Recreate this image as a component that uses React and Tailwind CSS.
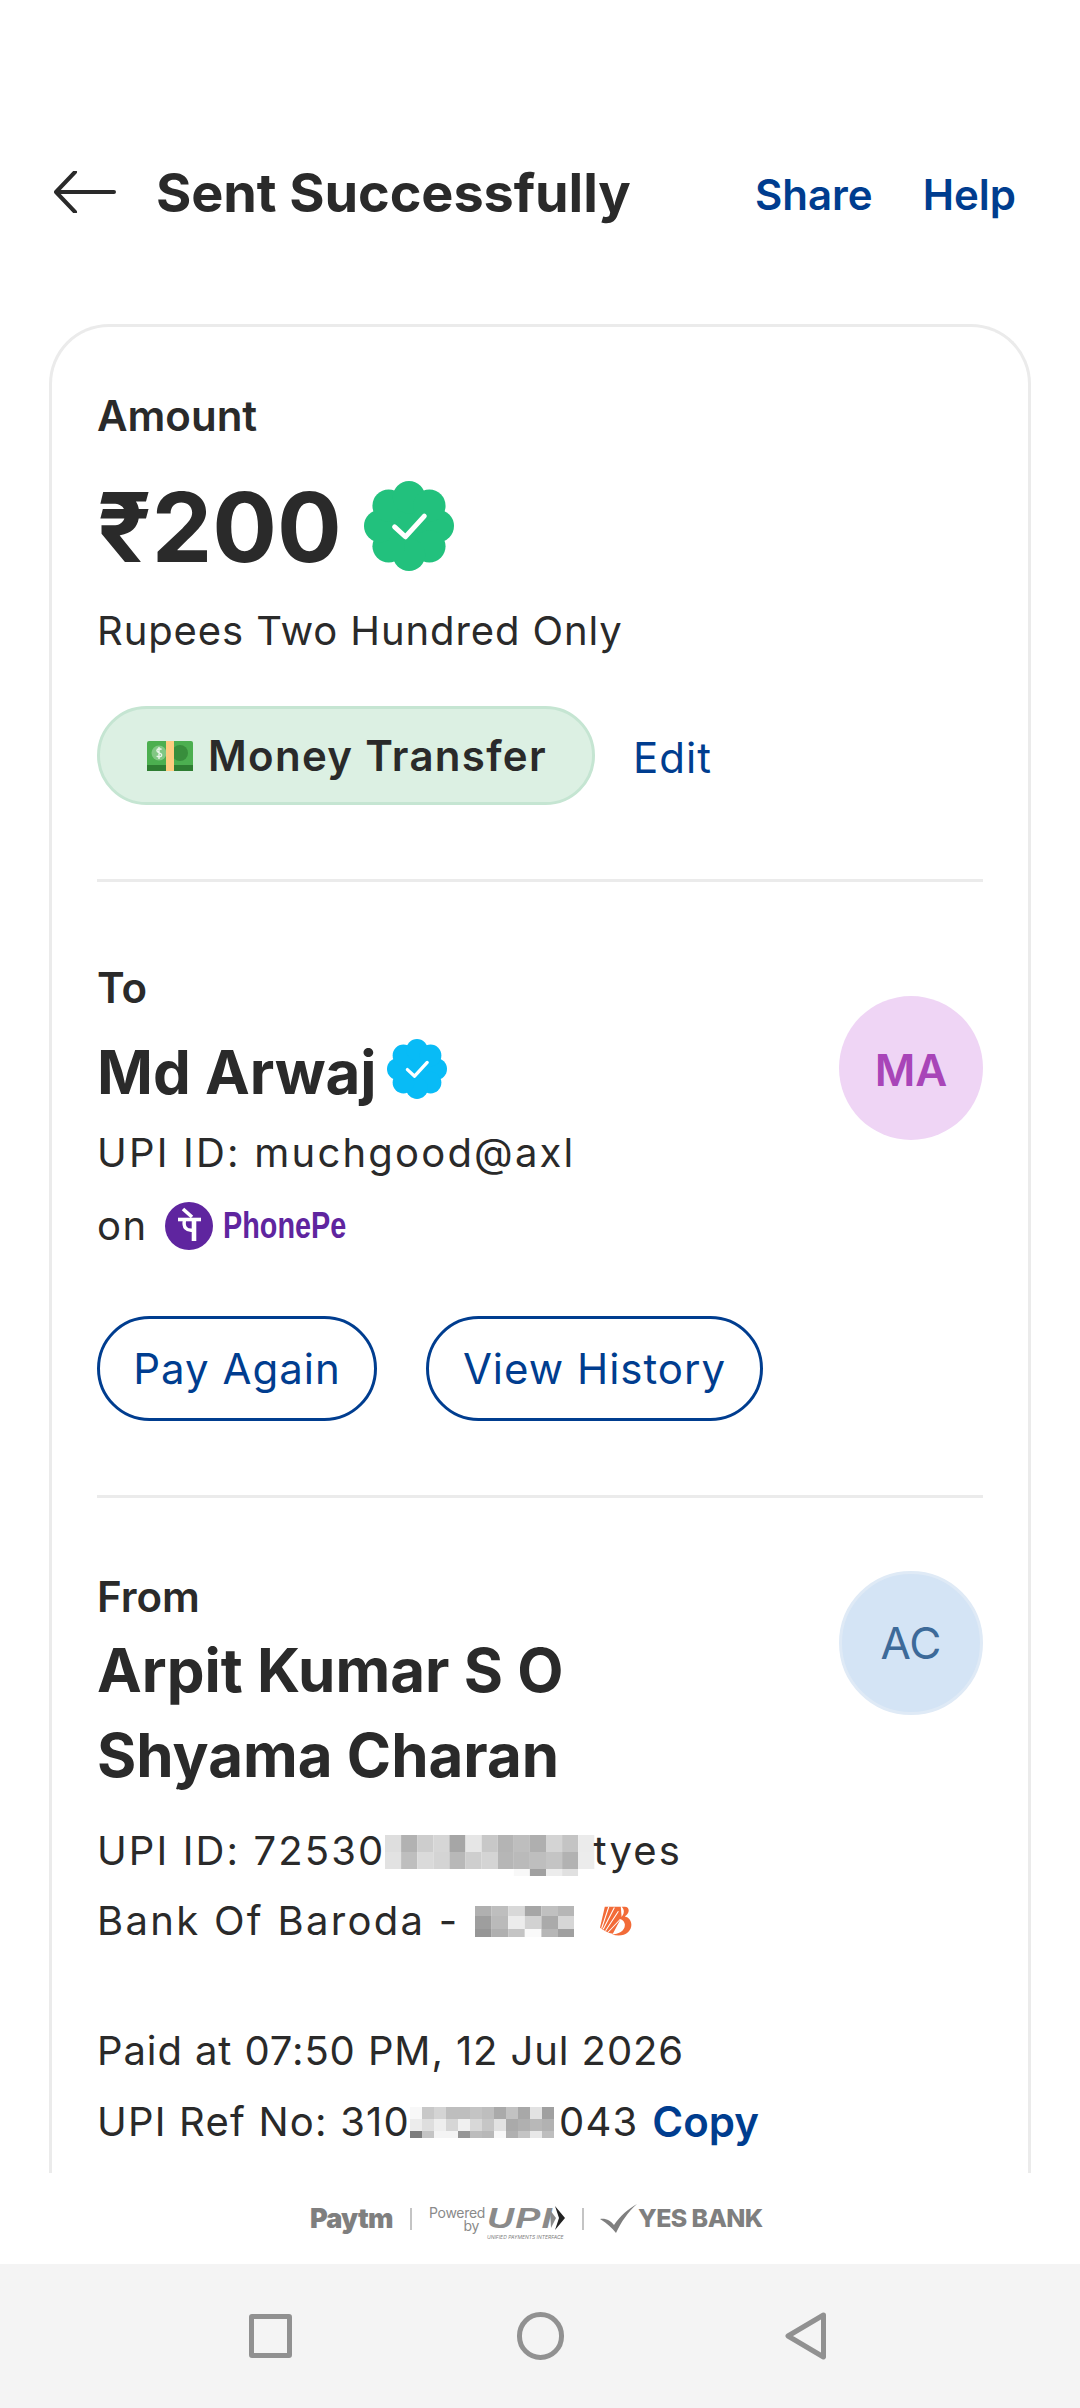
import React from 'react';

const Scallop = ({ size, color }) => {
    const lobes = Array.from({ length: 8 }, (_, i) => {
        const a = (i * Math.PI) / 4;
        return { cx: 50 + 32 * Math.cos(a), cy: 50 + 32 * Math.sin(a) };
    });
    return (
        <svg width={size} height={size} viewBox="0 0 100 100" className="shrink-0">
            <circle cx="50" cy="50" r="36" fill={color} />
            {lobes.map((l, i) => (
                <circle key={i} cx={l.cx} cy={l.cy} r="18" fill={color} />
            ))}
            <path d="M34 51 L46 62 L67 39" fill="none" stroke="white" strokeWidth="5.5" strokeLinecap="round" strokeLinejoin="round" />
        </svg>
    );
};

// pixelated part of the screenshot, rowHeights lets the last row be cut short
const Mosaic = ({ cellW, rowHeights, rows, className }) => {
    let top = 0;
    const placed = rows.map((row, i) => {
        const y = top;
        top += rowHeights[i];
        return { row, y, h: rowHeights[i] };
    });
    return (
        <svg width={rows[0].length * cellW} height={top} className={className}>
            {placed.map(({ row, y, h }) =>
                row.map((g, x) => (
                    <rect key={`${x}-${y}`} x={x * cellW} y={y} width={cellW} height={h} fill={`rgb(${g},${g},${g})`} />
                ))
            )}
        </svg>
    );
};

const MOSAIC_UPI = [
    [222, 178, 205, 214, 166, 230, 200, 180, 190, 175, 212, 196, 235],
    [226, 190, 218, 212, 184, 206, 212, 182, 186, 190, 196, 178, 236],
    [255, 255, 255, 255, 255, 255, 255, 255, 248, 160, 236, 224, 255],
];
const MOSAIC_BANK = [
    [176, 190, 216, 166, 192, 182],
    [158, 186, 236, 210, 170, 214],
    [150, 176, 196, 250, 182, 160],
];
const MOSAIC_REF = [
    [248, 200, 212, 190, 190, 196, 190, 170, 194, 168, 226, 160],
    [236, 222, 238, 214, 240, 216, 198, 226, 170, 176, 184, 178],
    [124, 196, 244, 244, 150, 188, 184, 248, 176, 196, 232, 190],
];

const Label = ({ children, className = '' }) => (
    <div className={`text-[42px] leading-[50px] font-semibold text-[#2a2a2a] ${className}`}>{children}</div>
);

const Body = ({ children, className = '' }) => (
    <div className={`text-[40px] leading-[50px] h-[50px] text-[#2a2a2a] ${className}`}>{children}</div>
);

const Avatar = ({ children, className }) => (
    <div className={`w-[144px] h-[144px] rounded-full flex items-center justify-center shrink-0 text-[44px] ${className}`}>
        {children}
    </div>
);

const Divider = () => <div className="h-[3px] bg-[#ebebeb]" />;

const OutlineButton = ({ children, className }) => (
    <button className={`h-[105px] rounded-full border-[3px] border-[#003d8f] flex items-center justify-center text-[42px] tracking-[1px] text-[#003d8f] ${className}`}>
        {children}
    </button>
);

function NoteIcon() {
    return (
        <svg width="46" height="30" viewBox="0 0 46 30" className="shrink-0">
            <rect x="0" y="0" width="46" height="30" rx="2" fill="#4caf50" />
            <rect x="0" y="24" width="46" height="6" fill="#2e7d32" />
            <circle cx="12" cy="12" r="7.5" fill="#81c784" />
            <circle cx="33" cy="12" r="8" fill="#388e3c" />
            <rect x="19" y="0" width="8" height="30" fill="#ffcc80" />
            <path d="M14.5 8.5c-1-1.2-4.6-1.2-4.6 1.2 0 2.6 4.8 1.6 4.8 4.2 0 2.4-3.8 2.4-5 1M12 6v12" stroke="#e8f5e9" strokeWidth="1.4" fill="none" />
        </svg>
    );
}

function PhonePeMark() {
    return (
        <svg width="48" height="48" viewBox="0 0 48 48" className="shrink-0">
            <circle cx="24" cy="24" r="24" fill="#5f259f" />
            <path d="M18 7 L27 15" fill="none" stroke="white" strokeWidth="3.6" />
            <path d="M13 17.5 H36" fill="none" stroke="white" strokeWidth="3.6" />
            <path d="M29 17 V39" fill="none" stroke="white" strokeWidth="4.6" />
            <path d="M19.5 18 C18 25 21 29.5 29 28" fill="none" stroke="white" strokeWidth="3.4" />
        </svg>
    );
}

function BarodaMark() {
    return (
        <svg width="32" height="30" viewBox="0 0 80 80" preserveAspectRatio="none" className="shrink-0">
            <path d="M0 58 L12 2 H52 L54 30 L32 74 C20 72 10 66 0 58Z" fill="#f26b38" />
            <path d="M4 60 L22 2 M8 62 L36 4 M14 66 L46 14 M20 70 L52 34" stroke="white" strokeWidth="2.6" />
            <path d="M54 2 H62 C74 2 76 18 62 28 C80 32 84 56 70 70 C60 80 44 80 30 76 C46 76 64 66 62 48 C60 38 52 34 46 34 C60 28 64 12 54 2Z" fill="#f26b38" />
        </svg>
    );
}

function FooterLogos() {
    return (
        <div className="h-[91px] bg-white flex items-center shrink-0 pl-[310px] text-[#7f7f7f]">
            <span className="w-[84px] text-[27px] leading-none font-black tracking-[-0.8px]">Paytm</span>
            <div className="w-[2px] h-[22px] bg-[#c4c4c4] ml-[16px]" />
            <div className="ml-[17px] w-[50px] text-right text-[14px] leading-[13px] text-[#8a8a8a] tracking-[-0.3px]">
                <div>Powered</div>
                <div>by</div>
            </div>
            <div className="ml-[8px] w-[79px] flex flex-col pt-[8px]">
                <div className="flex items-center h-[24px]">
                    <span className="w-[63px] font-['Liberation_Sans',sans-serif] italic font-bold text-[30px] leading-[24px] tracking-[1px] text-[#8a8a8a] scale-x-[1.25] origin-left">UPI</span>
                    <svg width="16" height="24" viewBox="0 0 16 24">
                        <path d="M5 0 L15 12 L5 24 L9 12 Z" fill="#222" />
                        <path d="M0 4 L6 12 L1 22 Z" fill="#8a8a8a" />
                    </svg>
                </div>
                <div className="mt-[4px] text-[5px] leading-[6px] italic whitespace-nowrap">UNIFIED PAYMENTS INTERFACE</div>
            </div>
            <div className="w-[2px] h-[22px] bg-[#c4c4c4] ml-[16px]" />
            <svg width="37" height="29" viewBox="0 0 37 29" className="ml-[16px]">
                <path d="M0 15 C6 14 11 17 14 21 C20 12 28 5 37 0 C28 8 21 18 16 29 C12 24 7 19 0 15Z" fill="#7f7f7f" />
            </svg>
            <span className="ml-[1px] text-[25px] leading-none font-extrabold tracking-[-0.6px] whitespace-nowrap">YES BANK</span>
        </div>
    );
}

function NavBar() {
    return (
        <div className="h-[144px] bg-[#f4f4f4] shrink-0 flex items-center">
            <div className="ml-[249px] w-[43px] h-[44px] border-[5px] border-[#919191] rounded-[3px]" />
            <div className="ml-[225px] w-[47px] h-[48px] border-[5px] border-[#919191] rounded-full" />
            <svg width="42" height="48" viewBox="0 0 42 48" className="ml-[221px]">
                <path d="M38.5 3 L3 24 L38.5 45 Z" fill="none" stroke="#919191" strokeWidth="5" strokeLinejoin="round" />
            </svg>
        </div>
    );
}

export default function App() {
    return (
        <div className="w-[1080px] h-[2408px] bg-white flex flex-col overflow-hidden font-['Inter',sans-serif] text-[#2a2a2a]">
            <div className="flex-1 min-h-0 overflow-hidden pt-[150px]">
                {/* header */}
                <div className="h-[84px] flex items-center px-[54px]">
                    <svg width="62" height="42" viewBox="0 0 62 42" className="shrink-0">
                        <path d="M60 21 H3 M21 1 L2 21 L21 41" fill="none" stroke="#2a2a2a" strokeWidth="4" strokeLinecap="round" strokeLinejoin="round" />
                    </svg>
                    <h1 className="ml-[40px] text-[54px] font-bold whitespace-nowrap tracking-[-0.1px]">Sent Successfully</h1>
                    <div className="ml-auto flex gap-[50px] mr-[10px] pt-[5px] text-[42px] font-semibold text-[#003d8f]">
                        <span>Share</span>
                        <span>Help</span>
                    </div>
                </div>

                {/* card */}
                <div className="mt-[90px] mx-[49px] border-[3px] border-b-0 border-[#ebebeb] rounded-t-[60px] px-[45px] pt-[64px] pb-[60px]">
                    <Label>Amount</Label>
                    <div className="mt-[31px] h-[110px] flex items-center">
                        <span className="text-[96px] leading-none font-bold">₹200</span>
                        <div className="ml-[22px] -mt-[3px]"><Scallop size={90} color="#22c17d" /></div>
                    </div>
                    <Body className="mt-[24px] tracking-[0.9px]">Rupees Two Hundred Only</Body>
                    <div className="mt-[50px] flex items-center">
                        <div className="w-[498px] h-[99px] rounded-full bg-[#dcf0e3] border-[3px] border-[#c5e5d2] flex items-center pl-[47px] gap-[15px]">
                            <NoteIcon />
                            <span className="text-[42px] font-semibold tracking-[1.3px]">Money Transfer</span>
                        </div>
                        <span className="ml-[38px] pt-[4px] text-[42px] tracking-[1px] text-[#003d8f]">Edit</span>
                    </div>
                    <div className="mt-[74px]"><Divider /></div>

                    {/* to */}
                    <div className="mt-[81px] flex justify-between">
                        <div>
                            <Label>To</Label>
                            <div className="mt-[17px] flex items-center">
                                <span className="text-[60px] leading-[85px] font-bold">Md Arwaj</span>
                                <div className="ml-[10px] -mt-[8px]"><Scallop size={60} color="#08bbf6" /></div>
                            </div>
                            <Body className="mt-[13px] tracking-[2.2px]">UPI ID: muchgood@axl</Body>
                            <div className="mt-[21px] flex items-center">
                                <Body className="tracking-[1.5px]">on</Body>
                                <div className="ml-[17px]"><PhonePeMark /></div>
                                <span className="ml-[10px] font-['Liberation_Sans',sans-serif] font-bold text-[36px] text-[#5f259f] scale-x-[0.8] origin-left">PhonePe</span>
                            </div>
                        </div>
                        <Avatar className="mt-[33px] pt-[3px] bg-[#efd5f5] text-[#a845b8] font-semibold">MA</Avatar>
                    </div>
                    <div className="mt-[63px] flex gap-[49px]">
                        <OutlineButton className="w-[280px]">Pay Again</OutlineButton>
                        <OutlineButton className="w-[337px]">View History</OutlineButton>
                    </div>
                    <div className="mt-[74px]"><Divider /></div>

                    {/* from */}
                    <div className="mt-[74px] flex justify-between">
                        <div className="w-[640px]">
                            <Label>From</Label>
                            <div className="mt-[6px] text-[60px] leading-[85px] font-bold">Arpit Kumar S O Shyama Charan</div>
                        </div>
                        <Avatar className="-mt-[1px] bg-[#d4e4f5] border-[3px] border-[#dfeaf6] text-[#3d6a99]">AC</Avatar>
                    </div>
                    <Body className="mt-[28px] flex items-start whitespace-nowrap tracking-[2.1px]">
                        UPI ID: 72530
                        <Mosaic cellW={16.1} rowHeights={[17, 17, 7]} rows={MOSAIC_UPI} className="mt-[9px] shrink-0" />
                        <span className="-ml-[1px]">tyes</span>
                    </Body>
                    <Body className="mt-[20px] flex items-center whitespace-nowrap tracking-[2.3px]">
                        Bank Of Baroda -
                        <Mosaic cellW={16.6} rowHeights={[10, 13, 8]} rows={MOSAIC_BANK} className="ml-[15px] shrink-0" />
                        <div className="ml-[26px]"><BarodaMark /></div>
                    </Body>
                    <Body className="mt-[80px] tracking-[0.9px]">Paid at 07:50 PM, 12 Jul 2026</Body>
                    <Body className="mt-[21px] flex items-center whitespace-nowrap tracking-[1.2px]">
                        UPI Ref No: 310
                        <Mosaic cellW={12} rowHeights={[12, 12, 7]} rows={MOSAIC_REF} className="mr-[5px] shrink-0" />
                        043
                        <span className="ml-[14px] text-[42px] font-semibold tracking-normal text-[#003d8f]">Copy</span>
                    </Body>
                </div>
            </div>
            <FooterLogos />
            <NavBar />
        </div>
    );
}
